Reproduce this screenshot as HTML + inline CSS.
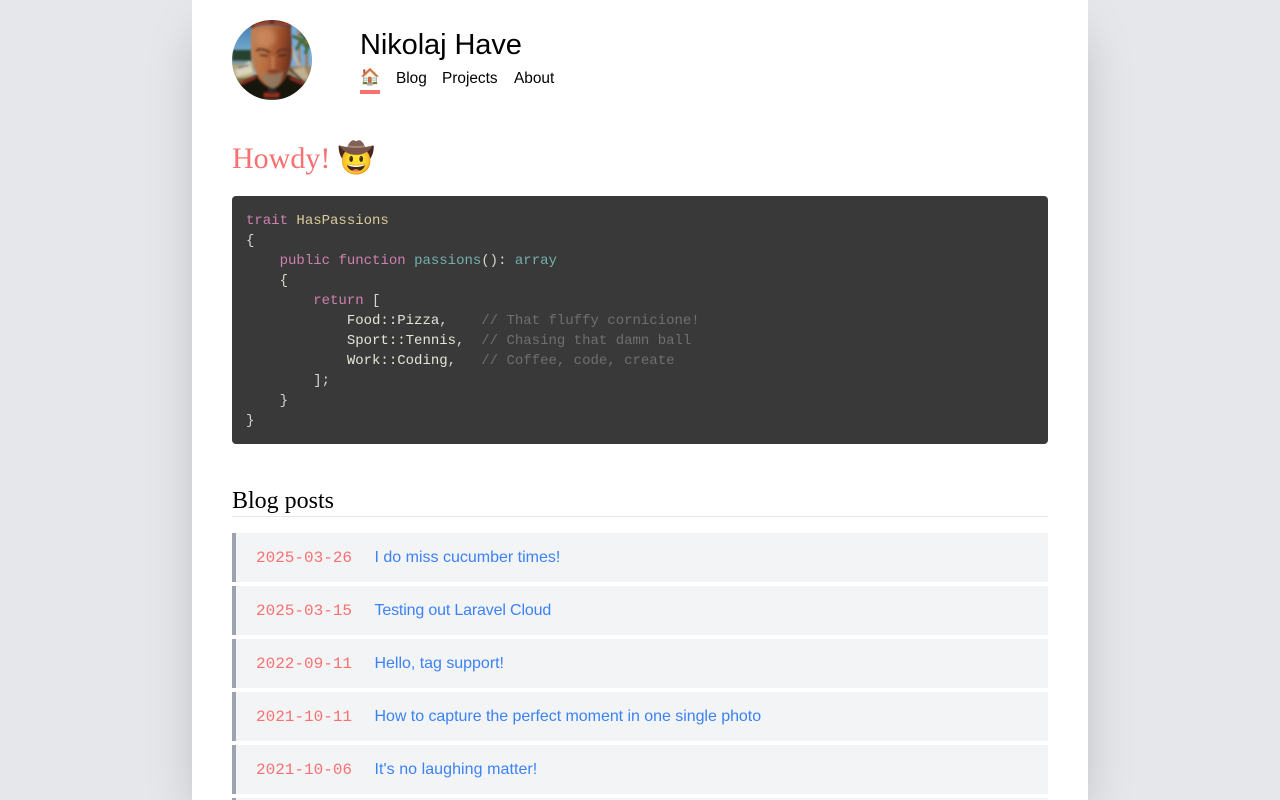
<!DOCTYPE html>
<html lang="en">
<head>
<meta charset="utf-8">
<title>Nikolaj Have</title>
<style>
html,body{margin:0;padding:0;width:1280px;height:800px;overflow:hidden;background:#e5e7eb;}
body{position:relative;font-family:"Liberation Sans",sans-serif;color:#000;}
#page{position:absolute;left:192px;top:0;width:896px;height:800px;background:#fff;box-shadow:0 25px 50px -12px rgba(0,0,0,.25);}
.abs{position:absolute;white-space:pre;}
#avatar{position:absolute;left:232px;top:20px;width:80px;height:80px;}
#name{left:360px;top:27px;font-size:29px;line-height:36px;letter-spacing:-.08px;}
.nav{top:69px;font-size:15.4px;line-height:20px;color:#000;text-decoration:none;}
#home{left:360px;top:68px;width:20px;text-align:center;font-size:16px;line-height:20px;}
#bar{position:absolute;left:360px;top:90px;width:20px;height:4px;background:#f87171;}
#howdy{left:232px;top:139px;font-family:"Liberation Serif",serif;font-size:30px;line-height:40px;color:#f87171;}
#code{position:absolute;left:232px;top:196px;width:816px;height:248px;background:#393939;border-radius:4px;overflow:hidden;}
#code pre{margin:0;position:absolute;left:14px;top:15px;font-family:"Liberation Mono",monospace;font-size:14px;line-height:20px;color:#d6d6d0;}
.k{color:#cf80b0}.c{color:#dccb9a}.f{color:#74b0ae}.n{color:#e4e4d8}.m{color:#6f6f6f}
#posts{left:232px;top:485px;font-family:"Liberation Serif",serif;font-size:24px;line-height:32px;color:#000;}
#rule{position:absolute;left:232px;top:516px;width:816px;height:1px;background:#e5e7eb;}
.row{position:absolute;left:232px;width:812px;height:49px;background:#f3f4f6;border-left:4px solid #9ca3af;}
.row .d{position:absolute;left:20px;top:15px;font-family:"Liberation Mono",monospace;font-size:16px;line-height:20px;color:#f87171;white-space:pre;}
.row a{position:absolute;left:138.5px;top:15px;font-size:16px;line-height:20px;color:#3b82f6;text-decoration:none;white-space:pre;}
</style>
</head>
<body>
<div id="page"></div>

<svg id="avatar" viewBox="0 0 80 80" xmlns="http://www.w3.org/2000/svg">
  <defs>
    <clipPath id="cp"><circle cx="40" cy="40" r="40"/></clipPath>
    <filter id="b1" x="-20%" y="-20%" width="140%" height="140%"><feGaussianBlur stdDeviation="1"/></filter>
    <filter id="b2" x="-30%" y="-30%" width="160%" height="160%"><feGaussianBlur stdDeviation="2.5"/></filter>
    <linearGradient id="sky" x1="0" y1="0" x2="0" y2="1">
      <stop offset="0" stop-color="#3a76ae"/><stop offset=".45" stop-color="#7fb2d2"/><stop offset="1" stop-color="#9cc0d0"/>
    </linearGradient>
    <linearGradient id="face" x1="0" y1="0" x2="1" y2="0.2">
      <stop offset="0" stop-color="#c08256"/><stop offset=".45" stop-color="#b96f42"/><stop offset=".75" stop-color="#9c4d2a"/><stop offset="1" stop-color="#6f331d"/>
    </linearGradient>
  </defs>
  <g clip-path="url(#cp)">
    <rect width="80" height="80" fill="url(#sky)"/>
    <g filter="url(#b1)">
      <rect x="0" y="30" width="20" height="11" fill="#26422f"/>
      <rect x="0" y="41" width="20" height="5" fill="#7f9aa0"/>
      <rect x="0" y="45" width="22" height="24" fill="#b8a878"/>
      <path d="M3 50 L18 41 L21 53 L5 57Z" fill="#d9d3bb"/>
      <path d="M6 48 L17 45" stroke="#55605c" stroke-width="1.6"/>
      <rect x="4" y="58" width="16" height="5" fill="#7c6a44"/>
      <rect x="58" y="0" width="22" height="46" fill="#74aedb"/>
      <path d="M66 4 L68 46" stroke="#a87f48" stroke-width="2.6" fill="none"/>
      <path d="M74 8 L75 50" stroke="#9a7744" stroke-width="3" fill="none"/>
      <path d="M59 26 C62 36 64 42 70 48" stroke="#cbb896" stroke-width="2.4" fill="none"/>
      <path d="M60 16 L70 20 L64 30 M68 13 L78 22 L73 34 M70 20 L76 30" stroke="#466a30" stroke-width="3.6" fill="none"/>
      <rect x="56" y="46" width="24" height="22" fill="#9c8663"/>
      <path d="M60 50 L72 47 L77 58 L62 62Z" fill="#bfb18e"/>
      <path d="M57 48 L70 61" stroke="#4d3a2a" stroke-width="2.6"/>
    </g>
    <g filter="url(#b1)">
      <path d="M0 66 C8 63 16 58 26 54 L40 70 L54 54 C64 57 72 62 80 66 L80 80 L0 80Z" fill="#171210"/>
      <path d="M8 64 L24 57 M58 58 L72 64" stroke="#9a3426" stroke-width="1.8" fill="none"/>
      <rect x="32" y="73" width="15" height="4" fill="#9c301c"/>
      <rect x="36" y="67" width="8" height="7" fill="#332b28"/>
      <path d="M19 9 C30 4 48 4 59 9 L60 30 C60 50 52 65 41 68 C30 66 20 52 19 32Z" fill="url(#face)"/>
      <path d="M29 52 C33 56 46 56 51 51 C50 60 47 67 41 68 C34 67 31 60 29 52Z" fill="#8f7f68" opacity=".8"/>
      <path d="M35 51 C39 49 44 49 47 51 C44 54 38 54 35 51Z" fill="#7d3f2d"/>
      <path d="M24 31 C28 28 33 29 38 33 M45 33 C48 29 53 28 57 31" stroke="#5f3220" stroke-width="2.4" fill="none"/>
      <path d="M28 35 L36 36 M46 36 L54 35" stroke="#33241f" stroke-width="1.8"/>
      <path d="M19 9 C30 3 48 3 59 9 L59 2 C48 -2 30 -2 19 2Z" fill="#5f2e20"/>
      <path d="M22 5 L38 2 M42 2 L58 5" stroke="#c5502f" stroke-width="1.6"/>
    </g>
    <ellipse cx="34" cy="18" rx="10" ry="9" fill="#dca078" opacity=".4" filter="url(#b2)"/>
    <rect x="39" y="36" width="4" height="13" fill="#d08c62" opacity=".5" filter="url(#b1)"/>
  </g>
</svg>

<div class="abs" id="name">Nikolaj Have</div>
<div class="abs" id="home">🏠</div>
<div id="bar"></div>
<a class="abs nav" style="left:396px" href="#">Blog</a>
<a class="abs nav" style="left:442px" href="#">Projects</a>
<a class="abs nav" style="left:514px" href="#">About</a>

<div class="abs" id="howdy">Howdy! 🤠</div>

<div id="code"><pre><span class="k">trait</span> <span class="c">HasPassions</span>
{
    <span class="k">public</span> <span class="k">function</span> <span class="f">passions</span>(): <span class="f">array</span>
    {
        <span class="k">return</span> [
            <span class="n">Food::Pizza</span>,    <span class="m">// That fluffy cornicione!</span>
            <span class="n">Sport::Tennis</span>,  <span class="m">// Chasing that damn ball</span>
            <span class="n">Work::Coding</span>,   <span class="m">// Coffee, code, create</span>
        ];
    }
}</pre></div>

<div class="abs" id="posts">Blog posts</div>
<div id="rule"></div>

<div class="row" style="top:533px"><span class="d">2025-03-26</span><a href="#">I do miss cucumber times!</a></div>
<div class="row" style="top:586px"><span class="d">2025-03-15</span><a href="#" style="letter-spacing:-.16px">Testing out Laravel Cloud</a></div>
<div class="row" style="top:639px"><span class="d">2022-09-11</span><a href="#" style="letter-spacing:-.02px">Hello, tag support!</a></div>
<div class="row" style="top:692px"><span class="d">2021-10-11</span><a href="#" style="letter-spacing:-.04px">How to capture the perfect moment in one single photo</a></div>
<div class="row" style="top:745px"><span class="d">2021-10-06</span><a href="#" style="letter-spacing:.06px">It's no laughing matter!</a></div>
<div class="row" style="top:798px"></div>
</body>
</html>
